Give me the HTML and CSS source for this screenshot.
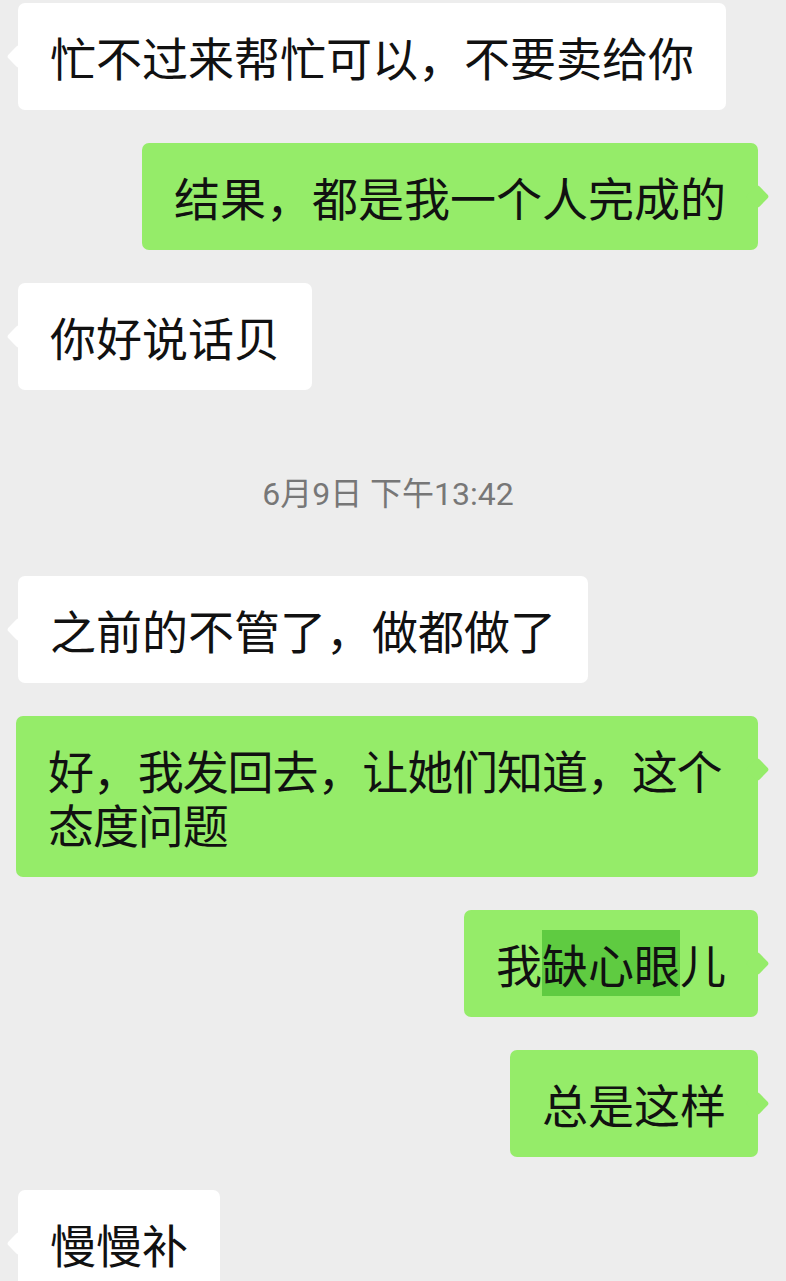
FILE: index.html
```html
<!DOCTYPE html>
<html lang="zh-CN">

<head>
  <meta charset="UTF-8">
  <meta name="viewport" content="width=device-width, initial-scale=1.0">
  <link rel="icon" href="data:,">
  <link rel="stylesheet" href="styles.css">
  <title>聊天</title>
</head>

<body>
  <main class="chat">
    <div class="msg msg-in">
      <p class="bubble">忙不过来帮忙可以，不要卖给你</p>
    </div>

    <div class="msg msg-out">
      <p class="bubble">结果，都是我一个人完成的</p>
    </div>

    <div class="msg msg-in">
      <p class="bubble">你好说话贝</p>
    </div>

    <div class="time">6月9日 下午13:42</div>

    <div class="msg msg-in">
      <p class="bubble">之前的不管了，做都做了</p>
    </div>

    <div class="msg msg-out">
      <p class="bubble bubble-tight">好，我发回去，让她们知道，这个态度问题</p>
    </div>

    <div class="msg msg-out">
      <p class="bubble">我<span class="selected">缺心眼</span>儿</p>
    </div>

    <div class="msg msg-out">
      <p class="bubble">总是这样</p>
    </div>

    <div class="msg msg-in">
      <p class="bubble">慢慢补</p>
    </div>
  </main>
</body>

</html>
```

FILE: styles.css
```css
html,
body {
  margin: 0;
  background: #ededed;
}

body {
  font-family: "Noto Sans CJK SC", "Noto Sans", sans-serif;
  color: #111;
  height: 1281px;
  overflow: hidden;
}

.chat {
  display: flex;
  flex-direction: column;
  gap: 33px;
  padding-block-start: 3px;
}

.msg {
  display: flex;
}

.msg-in {
  justify-content: flex-start;
  padding-inline-start: 18px;
}

.msg-out {
  justify-content: flex-end;
  padding-inline: 16px 28px;
}

.bubble {
  position: relative;
  margin: 0;
  max-inline-size: 742px;
  box-sizing: border-box;
  padding: 26px 32px 27px;
  border-radius: 7px;
  font-size: 46px;
  line-height: 54px;
  background: #fff;
}

.msg-out .bubble {
  background: #95ec69;
}

/* little pointer on the side of each bubble, level with the first line */
.bubble::before {
  content: "";
  position: absolute;
  top: 45px;
  inline-size: 17px;
  block-size: 17px;
  border-radius: 3px;
  background: inherit;
  transform: rotate(45deg);
}

.msg-in .bubble::before {
  left: -8px;
}

.msg-out .bubble::before {
  right: -8px;
}

.bubble-tight {
  letter-spacing: -1.1px;
}

.selected {
  background: #5fcb41;
}

.time {
  padding-block: 51px 29px;
  padding-inline-end: 10px;
  text-align: center;
  font-family: Roboto, "Noto Sans CJK SC", sans-serif;
  font-size: 32px;
  line-height: 40px;
  color: #777;
}
```
